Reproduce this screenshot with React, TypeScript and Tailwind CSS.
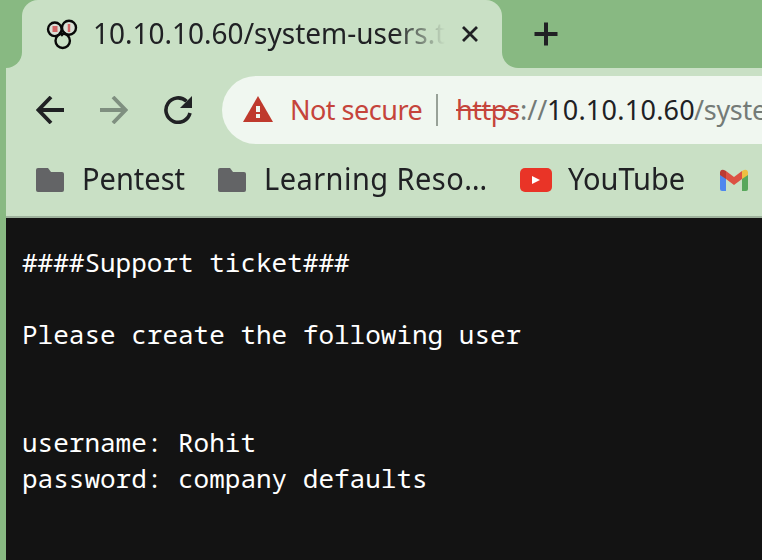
import type { ReactNode } from "react";

function Folder() {
  return (
    <svg width="28" height="24" viewBox="0 0 28 24" className="block shrink-0">
      <path d="M2 0H12L15 4H26Q28 4 28 6V22Q28 24 26 24H2Q0 24 0 22V2Q0 0 2 0Z" fill="#636466" />
    </svg>
  );
}

function Label({ look, children }: { look: string; children: ReactNode }) {
  return <span className={`block shrink-0 whitespace-nowrap leading-[38px] ${look}`}>{children}</span>;
}

function TabStrip() {
  return (
    <div className="flex h-[68px] shrink-0 bg-[#88b982]">
      <div className="w-1.5 shrink-0" />
      <div className="flex w-4 shrink-0 bg-[#c9e0c5]">
        <div className="w-4 rounded-br-2xl bg-[#88b982]" />
      </div>
      <div className="flex w-[480px] shrink-0 rounded-t-2xl bg-[#c9e0c5] pl-6">
        <svg width="34" height="32" viewBox="0 0 34 32" className="mt-[19px] block shrink-0" fill="none" stroke="#080808" strokeWidth="2.4">
          <circle cx="8.8" cy="10.3" r="6.8" fill="#d8dfd5" />
          <circle cx="23" cy="8.7" r="7" fill="#d8dfd5" />
          <circle cx="16.7" cy="21.8" r="7.2" />
          <path d="M13.5 13L16 16L19 13" />
          <path d="M9 7V13" stroke="#d16464" strokeWidth="5" />
          <path d="M23 5V13" stroke="#d16464" strokeWidth="2.5" />
        </svg>
        <div className="ml-[13px] mt-[14px] h-[41px] w-[354px] overflow-hidden text-[#202124] [mask-image:linear-gradient(to_right,black_302px,transparent_352px)]">
          <Label look="w-[354px] origin-[50%_30px] scale-y-[1.06] text-[28px]">10.10.10.60/system-users.txt</Label>
        </div>
        <svg width="18" height="18" viewBox="0 0 18 18" className="ml-[14px] mt-[25px] block shrink-0">
          <path d="M2 2L16 16M16 2L2 16" stroke="#202124" strokeWidth="2.8" />
        </svg>
      </div>
      <div className="flex grow bg-[#c9e0c5]">
        <div className="grow rounded-bl-2xl bg-[#88b982] pl-8 pt-[22px]">
          <svg width="24" height="24" viewBox="0 0 24 24" className="block">
            <path d="M0.5 12H23.5M12 0.5V23.5" stroke="#202124" strokeWidth="4" />
          </svg>
        </div>
      </div>
    </div>
  );
}

function Toolbar() {
  return (
    <div className="flex h-[84px] shrink-0 pl-[30px] pt-2">
      <svg width="28" height="28" viewBox="0 0 28 28" className="mt-5 block shrink-0" fill="none" stroke="#202124" strokeWidth="3.8">
        <path d="M28 14H3M15 1L2.5 14L15 27" />
      </svg>
      <svg width="28" height="28" viewBox="0 0 28 28" className="ml-9 mt-5 block shrink-0" fill="none" stroke="#7f8f80" strokeWidth="3.8">
        <path d="M0 14H25M13 1L25.5 14L13 27" />
      </svg>
      <svg width="28" height="28" viewBox="0 0 28 28" className="ml-9 mt-5 block shrink-0">
        <path d="M26 17A12.2 12.2 0 1 1 22.5 5.2" fill="none" stroke="#202124" strokeWidth="3.6" />
        <path d="M28 0V12H16Z" fill="#202124" />
      </svg>
      <div className="ml-[30px] flex h-[68px] min-w-0 grow overflow-hidden rounded-l-full bg-[#f0f7f0] pl-[21px]">
        <svg width="30" height="26" viewBox="0 0 30 26" className="mt-5 block shrink-0">
          <path d="M15 0L30 26H0Z" fill="#bf3a2d" />
          <path d="M13 10H17V16H13ZM13 18H17V22H13Z" fill="#f0f7f0" />
        </svg>
        <div className="ml-[17px] mt-[15px] text-[#c5443b]">
          <Label look="w-[133px] text-[27px] tracking-[-0.5px]">Not secure</Label>
        </div>
        <div className="ml-[13px] mt-[18px] h-8 w-0.5 shrink-0 bg-[#98a198]" />
        <div className="ml-[18px] mt-[15px] flex text-[27px] text-[#747b77]">
          <Label look="w-[64px] tracking-[-0.5px]">
            <span className="text-[#c5443b] line-through decoration-2">https</span>
          </Label>
          <Label look="w-[27px]">://</Label>
          <Label look="w-[147px] tracking-[0.25px]">
            <span className="text-[#202124]">10.10.10.60</span>
          </Label>
          <Label look="w-[240px] tracking-[-0.3px]">/system-users.txt</Label>
        </div>
      </div>
    </div>
  );
}

function Bookmarks() {
  return (
    <div className="flex h-[66px] shrink-0 border-b-2 border-[#9eb29c] pl-[30px] pt-2 text-[29px] text-[#202124]">
      <div className="mt-2"><Folder /></div>
      <div className="ml-[18px]"><Label look="w-[102px] origin-[50%_30px] scale-y-[1.04]">Pentest</Label></div>
      <div className="ml-[34px] mt-2"><Folder /></div>
      <div className="ml-[18px]"><Label look="w-[224px] origin-[50%_30px] scale-y-[1.04] tracking-[0.45px]">Learning Reso…</Label></div>
      <svg width="32" height="24" viewBox="0 0 32 24" className="ml-8 mt-2 block shrink-0">
        <rect width="32" height="24" rx="5" fill="#e93427" />
        <path d="M12 8L20 12L12 16Z" fill="white" />
      </svg>
      <div className="ml-4"><Label look="w-[118px] origin-[50%_30px] scale-y-[1.04]">YouTube</Label></div>
      <svg width="28" height="22" viewBox="0 0 28 22" className="ml-[34px] mt-[9px] block shrink-0">
        <path d="M0 5L6 9V22H2Q0 22 0 20Z" fill="#4e87ee" />
        <path d="M22 9L28 5V20Q28 22 26 22H22Z" fill="#58a85c" />
        <path d="M6 2L14 8L22 2V10L14 16L6 10Z" fill="#dc5143" />
        <path d="M0 3Q1-1 6 2V10L0 6Z" fill="#bb3b32" />
        <path d="M28 3Q27-1 22 2V10L28 6Z" fill="#eebf42" />
      </svg>
    </div>
  );
}

export default function App() {
  return (
    <div className="flex h-[560px] w-[762px] flex-col overflow-hidden bg-[#c9e0c5] font-['Noto_Sans','Open_Sans',sans-serif]">
      <TabStrip />
      <div className="flex grow">
        <div className="w-1.5 shrink-0 bg-[#88b982]" />
        <div className="flex min-w-0 grow flex-col">
          <Toolbar />
          <Bookmarks />
          <pre className="grow bg-[#131313] pl-4 pt-[26px] font-['Noto_Sans_Mono','DejaVu_Sans_Mono',monospace] text-[26px] leading-9 text-white">
            {"####Support ticket###\n\nPlease create the following user\n\n\nusername: Rohit\npassword: company defaults"}
          </pre>
        </div>
      </div>
    </div>
  );
}
